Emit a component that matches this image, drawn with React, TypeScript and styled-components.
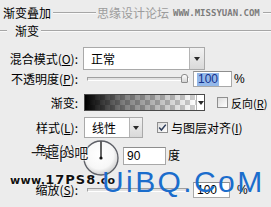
import React from "react";
import styled, { createGlobalStyle } from "styled-components";

const Global = createGlobalStyle`
  html, body { margin: 0; padding: 0; background: #ececec; }
  body {
    font-family: "Noto Sans CJK SC", "Noto Sans", sans-serif;
    font-size: 12px;
    color: #000;
  }
  * { box-sizing: border-box; }
`;

const Panel = styled.div`
  position: relative;
  width: 271px;
  height: 207px;
  overflow: hidden;
  background: #ececec;
  display: flex;
  flex-direction: column;
`;

const TitleBar = styled.div`
  display: flex;
  align-items: center;
  height: 25px;
  padding-left: 3px;
`;

const Title = styled.span`
  font-size: 12px;
  line-height: 14px;
  white-space: nowrap;
`;

const Rule = styled.div<{ $w?: number; $ml?: number }>`
  height: 2px;
  border-top: 1px solid #a6a6a6;
  border-bottom: 1px solid #fafafa;
  margin-left: ${(p) => p.$ml ?? 0}px;
  ${(p) => (p.$w ? `width:${p.$w}px; flex:none;` : `flex:1;`)}
`;

const SiteCn = styled.span`
  margin-left: 1px;
  font-size: 12px;
  line-height: 14px;
  color: #9c9c9c;
  white-space: nowrap;
`;

const SiteEn = styled.span`
  margin-left: 4px;
  font-family: "DejaVu Sans Mono", monospace;
  font-size: 9px;
  font-weight: bold;
  color: #7c7c7c;
  white-space: nowrap;
`;

const GroupHead = styled.div`
  display: flex;
  align-items: center;
  height: 12px;
`;

const GroupLabel = styled.span`
  margin: 0 2px 0 8px;
  font-size: 12px;
  line-height: 14px;
  white-space: nowrap;
`;

const Row = styled.div<{ $h: number; $mt: number; $top?: boolean }>`
  display: flex;
  align-items: ${(p) => (p.$top ? "flex-start" : "center")};
  height: ${(p) => p.$h}px;
  margin-top: ${(p) => p.$mt}px;
`;

const Label = styled.span<{ $mt?: number }>`
  width: 78px;
  flex: none;
  text-align: right;
  white-space: nowrap;
  font-size: 12px;
  line-height: 16px;
  margin-top: ${(p) => p.$mt ?? 0}px;
  u { text-decoration-thickness: 1px; text-underline-offset: 1px; }
`;

const Select = styled.div<{ $w: number; $h: number; $ml: number }>`
  display: flex;
  width: ${(p) => p.$w}px;
  height: ${(p) => p.$h}px;
  margin-left: ${(p) => p.$ml}px;
  border: 1px solid #a9a9a9;
  background: #fff;
  flex: none;
`;

const SelectText = styled.span`
  flex: 1;
  padding-left: 7px;
  display: flex;
  align-items: center;
  font-size: 12px;
`;

const ArrowBtn = styled.div<{ $w: number; $light?: boolean }>`
  width: ${(p) => p.$w}px;
  flex: none;
  display: flex;
  align-items: center;
  justify-content: center;
  border-left: 1px solid #b4b4b4;
  background: ${(p) => (p.$light ? "#fff" : "linear-gradient(#f2f2f2, #d9d9d9)")};
  &::after {
    content: "";
    border-left: 3px solid transparent;
    border-right: 3px solid transparent;
    border-top: 4px solid #2a2a2a;
    margin-top: 1px;
  }
`;

const Slider = styled.div<{ $w: number; $ml: number }>`
  position: relative;
  width: ${(p) => p.$w}px;
  height: 14px;
  margin-left: ${(p) => p.$ml}px;
  flex: none;
  display: flex;
  align-items: center;
`;

const Track = styled.div`
  width: 100%;
  height: 4px;
  border-top: 1px solid #9f9f9f;
  border-left: 1px solid #9f9f9f;
  border-bottom: 1px solid #ffffff;
  border-right: 1px solid #ffffff;
  background: #e2e2e2;
`;

const Thumb = styled.div`
  position: absolute;
  top: 2px;
  width: 7px;
  height: 9px;
  border: 1px solid #8c8c8c;
  border-radius: 3px 3px 1px 1px;
  background: linear-gradient(#fefefe, #d4d4d4);
`;

const Field = styled.div<{ $w: number; $h: number; $ml: number; $mt?: number }>`
  width: ${(p) => p.$w}px;
  height: ${(p) => p.$h}px;
  margin-left: ${(p) => p.$ml}px;
  margin-top: ${(p) => p.$mt ?? 0}px;
  flex: none;
  border: 1px solid #a8a8a8;
  border-top-color: #8e8e8e;
  background: #fff;
  display: flex;
  align-items: center;
  padding-left: 3px;
  font-family: "Liberation Sans", Arial, sans-serif;
  font-size: 12px;
`;

const Selected = styled.span`
  background: #93b8ea;
  color: #13308a;
  padding: 0 1px;
  line-height: 13px;
`;

const Unit = styled.span<{ $ml: number; $mt?: number }>`
  margin-left: ${(p) => p.$ml}px;
  margin-top: ${(p) => p.$mt ?? 0}px;
  font-size: 12px;
  line-height: 16px;
  white-space: nowrap;
  font-family: "Liberation Sans", "Noto Sans CJK SC", sans-serif;
`;

const GradientBox = styled.div`
  display: flex;
  width: 121px;
  height: 17px;
  margin-left: 6px;
  border: 1px solid #4a4a4a;
  flex: none;
`;

const GradientBar = styled.div`
  flex: 1;
  background:
    linear-gradient(to right, rgba(0, 0, 0, 1) 0%, rgba(0, 0, 0, 0.5) 35%, rgba(0, 0, 0, 0) 100%),
    repeating-conic-gradient(#cfcfcf 0% 25%, #ffffff 0% 50%) 0 0 / 10px 10px;
`;

const Check = styled.div<{ $ml: number }>`
  width: 11px;
  height: 11px;
  margin-left: ${(p) => p.$ml}px;
  flex: none;
  border: 1px solid #8f8f8f;
  background: linear-gradient(135deg, #dcdcdc, #ffffff);
  display: flex;
  align-items: center;
  justify-content: center;
`;

const CheckText = styled.span<{ $size?: number }>`
  margin-left: 3px;
  font-size: ${(p) => p.$size ?? 12}px;
  line-height: 16px;
  white-space: nowrap;
  u { text-decoration-thickness: 1px; text-underline-offset: 1px; }
`;

const DialWrap = styled.div`
  margin-left: 5px;
  width: 36px;
  height: 36px;
  flex: none;
`;

const MarkCn = styled.span`
  position: absolute;
  left: 31px;
  top: 143px;
  font-size: 14px;
  line-height: 18px;
  color: #1c1c1c;
  white-space: nowrap;
  text-shadow: 0 0 2px #fff, 0 0 2px #fff, 0 0 1px #fff;
`;

const MarkSite = styled.span`
  position: absolute;
  left: 10px;
  top: 173px;
  font-family: "DejaVu Sans", sans-serif;
  font-size: 11px;
  line-height: 14px;
  font-weight: 900;
  color: #111;
  white-space: nowrap;
  letter-spacing: 0.3px;
  text-shadow: 0 0 2px #fff, 0 0 1px #fff;
  b { font-size: 13px; letter-spacing: 1px; }
`;

const MarkBig = styled.span`
  position: absolute;
  left: 102px;
  top: 167px;
  font-family: "Liberation Sans", Arial, sans-serif;
  font-size: 30px;
  line-height: 30px;
  letter-spacing: 2.4px;
  color: #1b6dcc;
  white-space: nowrap;
`;

const Dial = () => (
  <DialWrap>
    <svg width="36" height="36" viewBox="0 0 36 36">
      <defs>
        <radialGradient id="dg" cx="45%" cy="40%" r="60%">
          <stop offset="0%" stopColor="#ffffff" />
          <stop offset="70%" stopColor="#f7f7f7" />
          <stop offset="100%" stopColor="#cfcfcf" />
        </radialGradient>
      </defs>
      <circle cx="18" cy="18" r="17" fill="url(#dg)" stroke="#5d5f66" strokeWidth="1.3" />
      <line x1="18" y1="1.5" x2="18" y2="18" stroke="#111" strokeWidth="1.3" />
      <circle cx="18" cy="18" r="1.6" fill="#111" />
    </svg>
  </DialWrap>
);

const CheckMark = () => (
  <svg width="9" height="9" viewBox="0 0 9 9">
    <path d="M1.2 4.6 L3.4 7 L7.8 1.6" fill="none" stroke="#2c3c5a" strokeWidth="1.5" />
  </svg>
);

export default function App() {
  return (
    <Panel>
      <Global />
      <TitleBar>
        <Title>渐变叠加</Title>
        <Rule $w={43} $ml={2} />
        <SiteCn>思缘设计论坛</SiteCn>
        <SiteEn>WWW.MISSYUAN.COM</SiteEn>
        <Rule $ml={3} />
      </TitleBar>
      <GroupHead>
        <Rule $w={7} />
        <GroupLabel>渐变</GroupLabel>
        <Rule />
      </GroupHead>

      <Row $h={23} $mt={10}>
        <Label>
          混合模式(<u>O</u>):
        </Label>
        <Select $w={122} $h={23} $ml={5}>
          <SelectText>正常</SelectText>
          <ArrowBtn $w={15} />
        </Select>
      </Row>

      <Row $h={16} $mt={1}>
        <Label>
          不透明度(<u>P</u>):
        </Label>
        <Slider $w={102} $ml={9}>
          <Track />
          <Thumb style={{ left: "94px" }} />
        </Slider>
        <Field $w={39} $h={16} $ml={4}>
          <Selected>100</Selected>
        </Field>
        <Unit $ml={2}>%</Unit>
      </Row>

      <Row $h={17} $mt={7}>
        <Label>渐变:</Label>
        <GradientBox>
          <GradientBar />
          <ArrowBtn $w={8} $light />
        </GradientBox>
        <Check $ml={12} />
        <CheckText $size={11}>
          反向(<u>R</u>)
        </CheckText>
      </Row>

      <Row $h={21} $mt={6}>
        <Label>
          样式(<u>L</u>):
        </Label>
        <Select $w={59} $h={21} $ml={6}>
          <SelectText>线性</SelectText>
          <ArrowBtn $w={13} />
        </Select>
        <Check $ml={14}>
          <CheckMark />
        </Check>
        <CheckText>
          与图层对齐(<u>I</u>)
        </CheckText>
      </Row>

      <Row $h={36} $mt={2} $top>
        <Label $mt={2}>
          角度(<u>A</u>):
        </Label>
        <Dial />
        <Field $w={43} $h={18} $ml={4} $mt={7}>
          90
        </Field>
        <Unit $ml={2} $mt={8}>
          度
        </Unit>
      </Row>

      <Row $h={16} $mt={6}>
        <Label>
          缩放(<u>S</u>):
        </Label>
        <Slider $w={102} $ml={9}>
          <Track />
        </Slider>
        <Field $w={37} $h={16} $ml={4}>
          100
        </Field>
        <Unit $ml={7}>%</Unit>
      </Row>

      <MarkCn>一起ps吧</MarkCn>
      <MarkSite>
        www.<b>17PS8</b>.co
      </MarkSite>
      <MarkBig>UiBQ.CoM</MarkBig>
    </Panel>
  );
}
